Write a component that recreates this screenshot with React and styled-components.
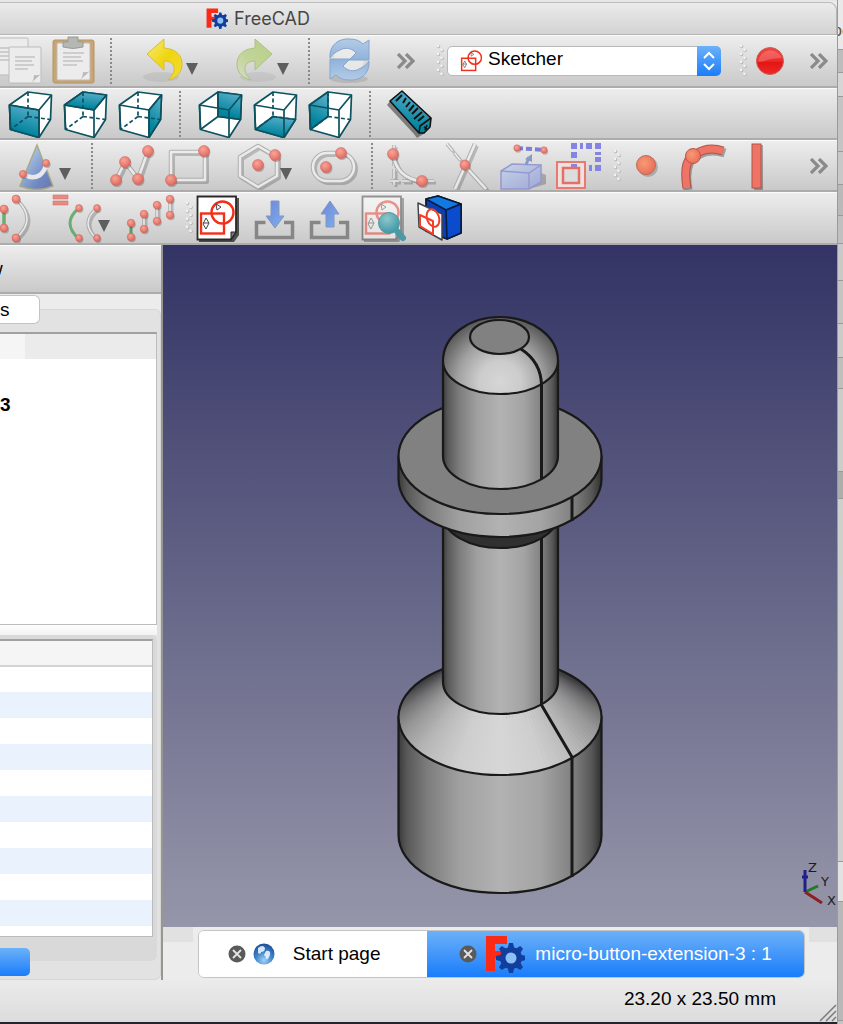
import { useState } from 'react'
import styled, { createGlobalStyle, css } from 'styled-components'

const GlobalStyle = createGlobalStyle`
  * {
    box-sizing: border-box;
  }
  body {
    margin: 0;
    background: #c4c4c4;
    font-family: "Liberation Sans", Arial, sans-serif;
    font-size: 19px;
    color: #000;
  }
  button {
    font: inherit;
    color: inherit;
    border: 0;
    padding: 0;
    background: none;
  }
`

/* ---------- shared svg paints ---------- */

const Paints = () => (
  <HiddenSvg aria-hidden="true">
    <defs>
      <radialGradient id="ball" cx="0.4" cy="0.35" r="0.65">
        <stop offset="0" stopColor="#ff9c8c" />
        <stop offset="1" stopColor="#e0574c" />
      </radialGradient>
      <radialGradient id="point" cx="0.4" cy="0.4" r="0.65">
        <stop offset="0" stopColor="#f79a74" />
        <stop offset="1" stopColor="#ea6d58" />
      </radialGradient>
      <linearGradient id="teal" x1="0.6" y1="0" x2="0.3" y2="1">
        <stop offset="0" stopColor="#58aeca" />
        <stop offset="0.8" stopColor="#02849e" />
      </linearGradient>
      <linearGradient id="gold" x1="0" y1="0" x2="1" y2="1">
        <stop offset="0" stopColor="#f6ec7c" />
        <stop offset="0.5" stopColor="#efd50f" />
        <stop offset="1" stopColor="#f2dc3a" />
      </linearGradient>
      <linearGradient id="green" x1="0" y1="0" x2="1" y2="1">
        <stop offset="0" stopColor="#b6cf86" />
        <stop offset="0.6" stopColor="#c3d49a" />
        <stop offset="1" stopColor="#d6dfc6" />
      </linearGradient>
      <linearGradient id="sync" x1="0" y1="0" x2="0" y2="1">
        <stop offset="0" stopColor="#b4cbe6" />
        <stop offset="1" stopColor="#8fb2dc" />
      </linearGradient>
      <linearGradient id="coneBlue" x1="0" y1="0" x2="1" y2="1">
        <stop offset="0.2" stopColor="#a3c3ea" />
        <stop offset="0.7" stopColor="#5f7cc0" />
        <stop offset="1" stopColor="#5a66b0" />
      </linearGradient>
      <linearGradient id="arrowBlue" x1="0" y1="0" x2="1" y2="1">
        <stop offset="0" stopColor="#6d84dc" />
        <stop offset="1" stopColor="#7fb2ea" />
      </linearGradient>
      <linearGradient id="boxBlue" x1="0" y1="0" x2="1" y2="1">
        <stop offset="0" stopColor="#c3d4ea" />
        <stop offset="1" stopColor="#98a2d8" />
      </linearGradient>
      <linearGradient id="record" x1="0" y1="0" x2="0" y2="1">
        <stop offset="0" stopColor="#f2453f" />
        <stop offset="0.5" stopColor="#ec2b28" />
        <stop offset="0.55" stopColor="#e31515" />
        <stop offset="1" stopColor="#ee2a26" />
      </linearGradient>
      <radialGradient id="lens" cx="0.4" cy="0.3" r="0.7">
        <stop offset="0" stopColor="#8fc6cc" />
        <stop offset="1" stopColor="#3f98a4" />
      </radialGradient>
      <radialGradient id="earth" cx="0.5" cy="0.8" r="0.8">
        <stop offset="0" stopColor="#9fd4f8" />
        <stop offset="0.5" stopColor="#3f83c8" />
        <stop offset="1" stopColor="#1d4c94" />
      </radialGradient>
      <linearGradient id="cylinder" x1="0" y1="0" x2="1" y2="0">
        <stop offset="0" stopColor="#3a3a3a" />
        <stop offset="0.04" stopColor="#585858" />
        <stop offset="0.14" stopColor="#7c7c7c" />
        <stop offset="0.3" stopColor="#a0a0a0" />
        <stop offset="0.5" stopColor="#b2b2b2" />
        <stop offset="0.7" stopColor="#a4a4a4" />
        <stop offset="0.86" stopColor="#808080" />
        <stop offset="0.95" stopColor="#585858" />
        <stop offset="1" stopColor="#303030" />
      </linearGradient>
      <radialGradient id="dome" gradientUnits="userSpaceOnUse" cx="500" cy="382" r="70">
        <stop offset="0" stopColor="#d6d6d6" />
        <stop offset="0.3" stopColor="#cccccc" />
        <stop offset="0.6" stopColor="#a2a2a2" />
        <stop offset="0.85" stopColor="#6c6c6c" />
        <stop offset="1" stopColor="#4c4c4c" />
      </radialGradient>
    </defs>
  </HiddenSvg>
)

/* ---------- icons, all on a 46 x 46 grid ---------- */

const Ball = ({ x, y, r = 5.5 }) => (
  <g>
    <circle cx={x + 1} cy={y + 1.5} r={r} fill="#000" opacity="0.25" />
    <circle cx={x} cy={y} r={r} fill="url(#ball)" stroke="#d2564c" strokeWidth="0.6" />
  </g>
)

const Wire = ({ d, w = 4, dash }) => (
  <g fill="none" strokeLinejoin="round">
    <path d={d} stroke="#000" opacity="0.22" strokeWidth={w} strokeDasharray={dash} transform="translate(2 2)" />
    <path d={d} stroke="#a8a8a8" strokeWidth={w + 0.5} strokeDasharray={dash} />
    <path d={d} stroke="#eeeeee" strokeWidth={w - 1.5} strokeDasharray={dash} />
  </g>
)

const cubeFaces = {
  front: 'M2.5 14L32 19V46.5L3.5 38.5Z',
  top: 'M2.5 14L21 1L44.5 4L32 19Z',
  right: 'M32 19L44.5 4L43.5 28.5L32 46.5Z',
  rear: 'M21 1L44.5 4L43.5 28.5L21 25.5Z',
  bottom: 'M3.5 38.5L21 25.5L43.5 28.5L32 46.5Z',
  left: 'M2.5 14L21 1V25.5L3.5 38.5Z',
}

const CubeIcon = ({ face }) => (
  <g fill="none" stroke="#0c5260" strokeWidth="1.7" strokeLinejoin="round">
    <path d="M2.5 14L21 1L44.5 4L43.5 28.5L32 46.5L3.5 38.5Z" fill="#fff" />
    <path d={cubeFaces[face]} fill="url(#teal)" />
    <path d="M21 1V25.5M21 25.5L3.5 38.5M21 25.5L43.5 28.5" strokeDasharray={face === 'rear' ? undefined : '4 2.5'} />
    <path d="M2.5 14L32 19L44.5 4M32 19V46.5M2.5 14L3.5 38.5" />
  </g>
)

const Page = ({ x, y, w, h }) => (
  <g>
    <rect x={x} y={y} width={w} height={h} rx="1" fill="#ececec" stroke="#bcbcbc" />
    <path
      d={`M${x + 6} ${y + 10}h${w - 12}M${x + 6} ${y + 14}h${w - 15}M${x + 6} ${y + 18}h${w - 13}M${x + 6} ${y + 22}h${w - 19}`}
      stroke="#c2c2c2"
      strokeWidth="1.4"
    />
    <path d={`M${x + w} ${y + h - 9}q-3 2 -7 1q0 5 -3 8z`} fill="#b9b9b9" />
  </g>
)

const SketchMark = () => (
  <g fill="none" stroke="#f2301a" strokeWidth="2.4">
    <circle cx="27.5" cy="17.5" r="11" />
    <rect x="6" y="18.5" width="23" height="20" />
    <path d="M21 9l5 3l-4 3zM11 23l3 5l-3 6l-3 -5zM8 28h6" stroke="#444" strokeWidth="1" />
  </g>
)

const SketchPage = () => (
  <g>
    <path d="M4 3H44V40L39 47H4Z" fill="#222" opacity="0.75" />
    <path d="M2.5 1.5H41V37L36 44.5H2.5Z" fill="#fff" stroke="#2a2a2a" strokeWidth="1.8" />
    <path d="M41 37H36V44Z" fill="#777" stroke="#222" />
    <SketchMark />
  </g>
)

const undoPath = 'M6 16L23 1V10C36 11 41 18 41 26C41 34 36 40 27 42C31 38 34 34 33 29C32 25 28 23 23 23V32Z'
const syncPath = 'M4 20C3 6 14 0 24 1C30 1 34 3 37 6L43 2V22H23L30 15C26 10 19 9 14 12C9 14 6 17 4 20Z'
const trayPath = 'M15.5 27.5H6.5V42.5H42.5V27.5H34'

const drawings = {
  copy: (
    <g>
      <Page x={-6} y={0} w={38} h={37} />
      <Page x={13} y={9} w={32} h={36} />
    </g>
  ),
  paste: (
    <g>
      <rect x="2" y="2" width="41" height="43" rx="2" fill="#caa571" stroke="#b39468" />
      <Page x={6} y={5} w={33} h={37} />
      <path d="M12 9V4H17V-1H27V4H32V9Q22 12 12 9Z" fill="#b4b7b2" stroke="#999c97" />
    </g>
  ),
  undo: (
    <g>
      <ellipse cx="20" cy="39" rx="18" ry="5" fill="#000" opacity="0.06" />
      <path d={undoPath} fill="url(#gold)" stroke="#d9be2c" />
    </g>
  ),
  redo: (
    <g>
      <ellipse cx="26" cy="39" rx="18" ry="5" fill="#000" opacity="0.05" />
      <path d={undoPath} fill="url(#green)" stroke="#adc184" transform="matrix(-1 0 0 1 46 0)" />
    </g>
  ),
  refresh: (
    <g stroke="#86a6cc">
      <ellipse cx="23" cy="41" rx="19" ry="4" fill="#000" opacity="0.1" stroke="none" />
      <circle cx="23" cy="21" r="15" fill="#eee" stroke="none" opacity="0.7" />
      <path d={syncPath} fill="url(#sync)" />
      <path d={syncPath} fill="url(#sync)" transform="rotate(180 23.5 21.5)" />
    </g>
  ),
  record: (
    <g>
      <circle cx="23" cy="23" r="13.5" fill="url(#record)" stroke="#c9605c" />
      <path d="M11 24A12.5 12.5 0 0 1 35 20Q26 20 20 22Q15 24 11 24Z" fill="#fff" opacity="0.2" />
    </g>
  ),
  measure: (
    <g strokeLinejoin="round">
      <path d="M0 14L3 10L32 42L38 42L30 47L27 43Z" fill="#555" opacity="0.7" />
      <path d="M3 10L15 0L44 27L43 36L37 42L32 42Z" fill="url(#teal)" stroke="#111" strokeWidth="1.6" />
      <path d="M32 42L33 35L44 27M37 36l3 2M38 39l2 -5" fill="none" stroke="#111" strokeWidth="1.6" />
      <path d="M9 10L15 4M16 12L19 7M19 16L23 11M22 20L27 14M25 23L31 17M27 28L35 21M31 30L37 25" stroke="#111" strokeWidth="2" />
    </g>
  ),
  cone: (
    <g>
      <path d="M23 2L39 43Q23 50 6 43Z" fill="url(#coneBlue)" stroke="#a3a37c" strokeWidth="1.5" />
      <path d="M9 31Q18 37 26 32Q31 28 32 21" fill="none" stroke="#ececec" strokeWidth="4.5" />
      <Ball x={9} y={31} r={3.6} />
      <Ball x={32} y={20} r={3.6} />
    </g>
  ),
  polyline: (
    <g>
      <Wire d="M7 37L16 19L29 36L39 8" />
      <Ball x={7} y={37} />
      <Ball x={16} y={19} />
      <Ball x={29} y={36} />
      <Ball x={39} y={8} />
    </g>
  ),
  rectangle: (
    <g>
      <Wire d="M7 9H41V37H7Z" />
      <Ball x={7} y={37} />
      <Ball x={40} y={8} />
    </g>
  ),
  polygon: (
    <g>
      <Wire d="M23 3L42 14V33L23 44L5 33V14Z" />
      <Ball x={40} y={12} />
      <Ball x={23} y={22} />
    </g>
  ),
  slot: (
    <g>
      <Wire d="M18 10H31A14 14 0 0 1 31 38H18A14 14 0 0 1 18 10Z" />
      <Ball x={32} y={10} />
      <Ball x={17} y={24} />
    </g>
  ),
  fillet: (
    <g>
      <Wire d="M5 2V42M1 38H45" w={3} dash="9 3" />
      <Wire d="M4 11Q8 36 33 38" />
      <Ball x={4} y={11} />
      <Ball x={33} y={38} />
    </g>
  ),
  trim: (
    <g>
      <Wire d="M3 1L21 23" w={3} dash="9 3" />
      <Wire d="M31 1L11 46M21 23L42 46" />
      <Ball x={21} y={22} r={5} />
    </g>
  ),
  external: (
    <g>
      <path d="M30 46L47 41V32L42 30Z" fill="#000" opacity="0.25" />
      <path d="M2 28L13 21L42 22V39L30 46H2Z" fill="url(#boxBlue)" stroke="#8c8fd0" strokeWidth="1.5" />
      <path d="M2 28L30 30L42 22M30 30V46" fill="none" stroke="#8c8fd0" strokeWidth="1.5" />
      <path d="M27 22L30 14" stroke="#7a90c4" strokeWidth="3" />
      <path d="M26 16L33 11L33 19Z" fill="#7a90c4" />
      <path d="M18 5L45 7" stroke="#6c6cd8" strokeWidth="4" strokeDasharray="6 3" />
      <Ball x={18} y={5} r={3.2} />
      <Ball x={45} y={7} r={3.2} />
    </g>
  ),
  carbon: (
    <g fill="none">
      <path
        d="M17 0h6v6h-6zM26 0h3v6h-3zM32 0h6v6h-6zM41 0h6v6h-6zM17 9h6v6h-6zM41 9h6v3h-6zM41 14h6v5h-6zM41 22h6v6h-6zM35 22h3v6h-3z"
        fill="#8484e4"
      />
      <rect x="3" y="19" width="28" height="26" fill="#eee2e0" stroke="#ea7a70" strokeWidth="2" />
      <path d="M17 21h6v4h-6z" fill="#8484e4" />
      <rect x="9" y="25" width="16" height="15" fill="#ddd" stroke="#e27066" strokeWidth="2.5" />
    </g>
  ),
  dot: (
    <g>
      <circle cx="25" cy="24" r="10" fill="#000" opacity="0.2" />
      <circle cx="23" cy="22" r="9.5" fill="url(#point)" stroke="#bb6a58" />
    </g>
  ),
  arc: (
    <g fill="none">
      <path d="M10 47Q5 18 20 12Q32 5 47 10" stroke="#000" opacity="0.3" strokeWidth="9" />
      <path d="M9 45Q4 16 18 11Q30 3 45 8" stroke="#b3524a" strokeWidth="9" />
      <path d="M9 45Q4 16 18 11Q30 3 45 8" stroke="#ee7466" strokeWidth="7" />
      <circle cx="15" cy="13" r="7.5" fill="url(#point)" stroke="#b8584e" />
    </g>
  ),
  line: (
    <g>
      <rect x="21" y="2" width="9" height="45" fill="#000" opacity="0.3" />
      <rect x="19" y="1" width="9" height="44" fill="#ee7466" stroke="#b3524a" />
    </g>
  ),
  tangent: (
    <g>
      <Wire d="M33 4Q55 24 33 43" w={3} />
      <path d="M21 14V33" stroke="#58a660" strokeWidth="3.5" />
      <Ball x={21} y={14} r={4} />
      <Ball x={21} y={33} r={4} />
      <Ball x={33} y={4} r={4} />
      <Ball x={33} y={43} r={4} />
    </g>
  ),
  equal: (
    <g>
      <path d="M0 0H15V4H0ZM0 6H15V10H0Z" fill="#ea7a70" stroke="#c2665e" strokeWidth="0.6" />
      <path d="M26 13Q8 28 26 44" fill="none" stroke="#58a660" strokeWidth="3" />
      <Wire d="M44 13Q26 28 44 44" w={3} />
      <Ball x={26} y={13} r={3.4} />
      <Ball x={26} y={43} r={3.4} />
      <Ball x={44} y={13} r={3.4} />
      <Ball x={44} y={43} r={3.4} />
    </g>
  ),
  symmetric: (
    <g>
      <path d="M5 28V43" stroke="#3f9448" strokeWidth="3" />
      <Wire d="M18 19V34M31 10V26M44 4V20" w={3} />
      {[[5, 28], [5, 42], [18, 19], [18, 34], [31, 10], [31, 26], [44, 4], [44, 20]].map(([x, y]) => (
        <Ball key={`${x}-${y}`} x={x} y={y} r={3.8} />
      ))}
    </g>
  ),
  sketch: <SketchPage />,
  leave: (
    <g>
      <path d={trayPath} fill="none" stroke="#868686" strokeWidth="3.5" />
      <path d="M21 6H29V21H34L25 33L16 21H21Z" fill="url(#arrowBlue)" stroke="#8297bd" />
    </g>
  ),
  open: (
    <g>
      <path d={trayPath} fill="none" stroke="#868686" strokeWidth="3.5" />
      <path d="M21 32H29V19H34L25 6L16 19H21Z" fill="url(#arrowBlue)" stroke="#8297bd" />
    </g>
  ),
  view: (
    <g>
      <g opacity="0.45">
        <SketchPage />
      </g>
      <path d="M36 35L43 43" stroke="#4a9aa6" strokeWidth="6" strokeLinecap="round" />
      <circle cx="29" cy="28" r="10.5" fill="url(#lens)" stroke="#5c9aa2" />
    </g>
  ),
  mapped: (
    <g strokeLinejoin="round">
      <path d="M11 4L23 1L46 9V38L32 44L11 36Z" fill="#0a3fb8" stroke="#061a3c" strokeWidth="1.8" />
      <path d="M11 4L23 1L46 9L31 15Z" fill="#1279e0" stroke="#061a3c" strokeWidth="1.5" />
      <path d="M31 15L46 9V38L32 44Z" fill="#0b4ccf" stroke="#061a3c" strokeWidth="1.5" />
      <path d="M3 8L27 19V45L4 32Z" fill="#fff" stroke="#444" strokeWidth="1.5" />
      <g fill="none" stroke="#f2402c" strokeWidth="2">
        <ellipse cx="18" cy="23" rx="6" ry="9" transform="rotate(-20 18 23)" />
        <path d="M5 20L18 26V39L5 31Z" />
      </g>
    </g>
  ),
}

const Icon = ({ name, faded }) => (
  <IconSvg viewBox="0 0 46 46" $faded={faded} aria-hidden="true">
    {name.startsWith('cube-') ? <CubeIcon face={name.slice(5)} /> : drawings[name]}
  </IconSvg>
)

const teeth = Array.from({ length: 8 }, (_, i) => i * 45)

const Logo = ({ size }) => (
  <LogoSvg viewBox="0 0 40 38" $size={size} aria-hidden="true">
    <path d="M1 1H22V9H10V16H17V23H10V36H1Z" fill="#fb2a16" />
    <g fill="#123f9e" transform="translate(26 23)">
      {teeth.map((a) => (
        <path key={a} d="M-3.5 -9L-2 -15H2L3.5 -9Z" transform={`rotate(${a})`} />
      ))}
      <circle r="11" />
      <circle r="5.5" fill="#8cc0f6" />
    </g>
  </LogoSvg>
)

const Chevrons = () => (
  <svg width="18" height="16" viewBox="0 0 18 16" aria-hidden="true">
    <path d="M1 1L8 8L1 15M9 1L16 8L9 15" fill="none" stroke="#8a8a8a" strokeWidth="3.2" />
  </svg>
)

const Triangle = () => (
  <svg width="12" height="12" viewBox="0 0 12 12" aria-hidden="true">
    <path d="M0 0H12L6 12Z" fill="#5e5e5e" />
  </svg>
)

/* ---------- toolbars ---------- */

const Tool = ({ name, label, faded }) => (
  <ToolButton type="button" aria-label={label}>
    <Icon name={name} faded={faded} />
  </ToolButton>
)

const MenuTool = ({ name, label, faded, lead, width }) => (
  <MenuButton type="button" aria-label={label} aria-haspopup="menu" $lead={lead} $width={width}>
    <Icon name={name} faded={faded} />
    <MenuArrow>
      <Triangle />
    </MenuArrow>
  </MenuButton>
)

const Grip = () => (
  <GripSvg viewBox="0 0 8 34" aria-hidden="true">
    {[0, 8, 16, 24].map((y) => (
      <g key={y} fill="#b4b4b4">
        <circle cx="2.5" cy={y + 2.5} r="1.8" />
        <circle cx="6" cy={y + 6.5} r="1.8" />
        <circle cx="2" cy={y + 2} r="1.4" fill="#f2f2f2" />
        <circle cx="5.5" cy={y + 6} r="1.4" fill="#f2f2f2" />
      </g>
    ))}
  </GripSvg>
)

const Toolbars = () => {
  const [bench, setBench] = useState('Sketcher')

  return (
    <>
      <Toolbar $shift={9} $tall>
        <Tool name="copy" label="Copy" />
        <Tool name="paste" label="Paste" />
        <Separator $width={20} />
        <MenuTool name="undo" label="Undo" lead={20} width={91} />
        <MenuTool name="redo" label="Redo" lead={20} width={84} />
        <Separator />
        <Tool name="refresh" label="Refresh" />
        <MoreButton type="button" aria-label="More file tools" $width={60}>
          <Chevrons />
        </MoreButton>
        <Grip />
        <Workbench>
          <WorkbenchIcon viewBox="0 0 46 46" aria-hidden="true">
            <SketchMark />
          </WorkbenchIcon>
          <WorkbenchSelect aria-label="Workbench" value={bench} onChange={(e) => setBench(e.target.value)}>
            <option>Sketcher</option>
          </WorkbenchSelect>
          <Stepper>
            <svg width="14" height="20" viewBox="0 0 14 20">
              <path d="M2 7L7 2L12 7M2 13L7 18L12 13" fill="none" stroke="#fff" strokeWidth="2" />
            </svg>
          </Stepper>
        </Workbench>
        <Grip />
        <ToolButton type="button" aria-label="Record macro" $narrow>
          <Icon name="record" />
        </ToolButton>
        <MoreButton type="button" aria-label="More macro tools" $end>
          <Chevrons />
        </MoreButton>
      </Toolbar>

      <Toolbar $lead={2}>
        <Tool name="cube-front" label="Front" />
        <Tool name="cube-top" label="Top" />
        <Tool name="cube-right" label="Right" />
        <Separator />
        <Tool name="cube-rear" label="Rear" />
        <Tool name="cube-bottom" label="Bottom" />
        <Tool name="cube-left" label="Left" />
        <Separator />
        <Tool name="measure" label="Measure distance" />
      </Toolbar>

      <Toolbar>
        <MenuTool name="cone" label="Conics" faded lead={14} width={79} />
        <Separator />
        <Tool name="polyline" label="Polyline" faded />
        <Tool name="rectangle" label="Rectangle" faded />
        <MenuTool name="polygon" label="Polygon" faded lead={21} width={90} />
        <Tool name="slot" label="Slot" faded />
        <Separator />
        <Tool name="fillet" label="Fillet" faded />
        <Tool name="trim" label="Trim edge" faded />
        <Tool name="external" label="External geometry" faded />
        <Tool name="carbon" label="Carbon copy" />
        <Grip />
        <Tool name="dot" label="Point" />
        <Tool name="arc" label="Arc" />
        <Tool name="line" label="Line" />
        <MoreButton type="button" aria-label="More geometry tools" $end>
          <Chevrons />
        </MoreButton>
      </Toolbar>

      <Toolbar $shift={22} $tall>
        <Tool name="tangent" label="Block" faded />
        <MenuTool name="equal" label="Equal" faded lead={20} width={88} />
        <Tool name="symmetric" label="Symmetry" faded />
        <Grip />
        <Tool name="sketch" label="New sketch" />
        <Tool name="leave" label="Leave sketch" />
        <Tool name="open" label="Edit sketch" />
        <Tool name="view" label="View sketch" />
        <Tool name="mapped" label="Map sketch to face" />
      </Toolbar>
    </>
  )
}

/* ---------- side panel ---------- */

const rows = Array.from({ length: 10 }, (_, i) => i)

const SidePanel = () => (
  <Side>
    <DockTitle>
      <CutText>w</CutText>
    </DockTitle>
    <SideTab type="button">s</SideTab>
    <Pane>
      <Tree>
        <TreeHeader />
        <TreeList>
          <li>3</li>
        </TreeList>
      </Tree>
      <Divider />
      <Properties>
        <PropertyFrame>
          <PropertyTable aria-label="Properties">
            <thead>
              <tr>
                <th />
              </tr>
            </thead>
            <tbody>
              {rows.map((i) => (
                <tr key={i}>
                  <td />
                </tr>
              ))}
            </tbody>
          </PropertyTable>
        </PropertyFrame>
      </Properties>
      <DataButton type="button" aria-label="Data" />
    </Pane>
  </Side>
)

/* ---------- 3d view ---------- */

// grey level of the tapered face, by angle from the front
const shades = [[0, 214], [25, 206], [50, 184], [75, 150], [95, 112], [115, 66], [130, 40], [180, 36]]

const shade = (angle) => {
  const a = Math.abs(angle)
  const i = shades.findIndex(([stop]) => stop >= a) || 1
  const [a0, s0] = shades[i - 1]
  const [a1, s1] = shades[i]
  const level = Math.round(s0 + ((s1 - s0) * (a - a0)) / (a1 - a0))
  return `rgb(${level},${level},${level})`
}

const onRing = (angle, rx, ry, cy) => {
  const t = (angle * Math.PI) / 180
  return `${(500 + rx * Math.sin(t)).toFixed(1)} ${(cy + ry * Math.cos(t)).toFixed(1)}`
}

const wedges = Array.from({ length: 120 }, (_, i) => i * 3 - 180).map((a) => ({
  a,
  d: `M${onRing(a, 102, 58, 717)}L${onRing(a + 3.5, 102, 58, 717)}L${onRing(a + 3.5, 56, 31, 682)}L${onRing(a, 56, 31, 682)}Z`,
}))

const Part = () => (
  <PartSvg viewBox="397 315 206 580" role="img" aria-label="Button extension">
    <g stroke="#191919" strokeWidth="2.2" strokeLinejoin="round">
      <path d="M398.5 717V835A101.5 58 0 0 0 601.5 835V717Z" fill="url(#cylinder)" />
      <g stroke="none">
        {wedges.map(({ a, d }) => (
          <path key={a} d={d} fill={shade(a + 1.5)} />
        ))}
      </g>
      <ellipse cx="500" cy="717" rx="101.5" ry="58" fill="none" />
      <path d="M443 520V682A57.5 32 0 0 0 558 682V520Z" fill="url(#cylinder)" />
      <path d="M541.5 530V705L572 757V877" fill="none" strokeWidth="3" />
      <path d="M443 500V515A57.5 33 0 0 0 558 515V500Z" fill="#303030" />
      <path d="M398.5 456V479A101.5 58 0 0 0 601.5 479V456Z" fill="url(#cylinder)" />
      <ellipse cx="500" cy="456" rx="101.5" ry="58" fill="#818181" />
      <path d="M572 497V521" strokeWidth="3" />
      <path d="M443 360V456A57.5 33 0 0 0 558 456V360Z" fill="url(#cylinder)" />
      <path d="M443 361C443 335 470 317 500 317C530 317 558 335 558 361A57.5 33 0 0 1 443 361Z" fill="url(#dome)" />
      <ellipse cx="499.5" cy="337" rx="29.5" ry="17" fill="#818181" />
      <path d="M521 349Q541 362 541.5 385V479" fill="none" strokeWidth="3" />
    </g>
  </PartSvg>
)

const AxisCross = () => (
  <AxisSvg viewBox="0 0 36 48" aria-hidden="true">
    <path d="M4 31L17 25" stroke="#1f7a24" strokeWidth="3" />
    <path d="M4 31V9M1 16H7" stroke="#20208c" strokeWidth="3" fill="none" />
    <path d="M4 31L21 42M12 36L18 40" stroke="#8c2024" strokeWidth="3" />
    <text x="7" y="11">Z</text>
    <text x="20" y="25">Y</text>
    <text x="26" y="44">X</text>
  </AxisSvg>
)

const CloseIcon = () => (
  <svg width="18" height="18" viewBox="0 0 18 18" aria-hidden="true">
    <circle cx="9" cy="9" r="8.5" fill="#5a5a5a" />
    <path d="M5 5L13 13M13 5L5 13" stroke="#e4e4e4" strokeWidth="1.8" />
  </svg>
)

const Globe = () => (
  <svg width="22" height="22" viewBox="0 0 22 22" aria-hidden="true">
    <circle cx="11" cy="11" r="10.5" fill="url(#earth)" />
    <path d="M5 5Q10 1 12 5Q12 9 8 9Q8 12 5 10ZM13 8Q18 7 17 12Q15 17 13 16Q13 13 11 12Z" fill="#e6f3ff" opacity="0.9" />
  </svg>
)

const backdrop = [
  [50, '#e9e9e9'], [11, '#bdbdbd'], [24, '#d6d6d6'], [55, '#c4c4c4'], [33, '#c8c8c8'], [31, '#b9b9b9'],
  [28, '#c0c0c0'], [37, '#c9c9c9'], [43, '#c4c4c4'], [34, '#cbcbcb'], [31, '#bfbfbf'], [83, '#cccccc'],
  [27, '#adadad'], [363, '#cfcfcf'], [40, '#e2e2e2'], [119, '#b8b8b8'],
]

export default function App() {
  const [active, setActive] = useState('doc')

  return (
    <Desktop>
      <GlobalStyle />
      <Paints />
      <Window>
        <TitleBar>
          <Logo size={22} />
          <h1>FreeCAD</h1>
        </TitleBar>
        <Toolbars />
        <Body>
          <SidePanel />
          <Main>
            <Viewer>
              <Part />
              <AxisCross />
            </Viewer>
            <TabStrip>
              <TabBar>
                <DocTab $first $active={active === 'start'} $grow={211}>
                  <button type="button" aria-label="Close start page">
                    <CloseIcon />
                  </button>
                  <TabButton type="button" $gap={18} aria-pressed={active === 'start'} onClick={() => setActive('start')}>
                    <Globe />
                    Start page
                  </TabButton>
                </DocTab>
                <DocTab $active={active === 'doc'} $grow={378}>
                  <button type="button" aria-label="Close document">
                    <CloseIcon />
                  </button>
                  <TabButton type="button" $gap={10} aria-pressed={active === 'doc'} onClick={() => setActive('doc')}>
                    <Logo size={40} />
                    micro-button-extension-3 : 1
                  </TabButton>
                </DocTab>
              </TabBar>
            </TabStrip>
          </Main>
        </Body>
        <StatusBar>
          <span>23.20 x 23.50 mm</span>
          <ResizeGrip viewBox="0 0 18 18" aria-hidden="true">
            <path d="M1 17L17 1M7 17L17 7M13 17L17 13" stroke="#7c7c7c" strokeWidth="1.5" />
          </ResizeGrip>
        </StatusBar>
      </Window>
      <Backdrop>
        {backdrop.map(([height, color], i) => (
          <Slab key={i} $height={height} $color={color}>
            {i === 0 && 'oc'}
          </Slab>
        ))}
      </Backdrop>
    </Desktop>
  )
}

const bar = css`
  background: linear-gradient(#ededed, #c9c9c9);
  border-top: 1px solid #fbfbfb;
  border-bottom: 2px solid #acacac;
`

const HiddenSvg = styled.svg`
  display: block;
  position: absolute;
  width: 0;
  height: 0;
`

const Desktop = styled.div`
  display: grid;
  grid-template-columns: minmax(0, 1fr) 6px;
  min-height: 100vh;
  overflow: hidden;
`

const Window = styled.div`
  display: flex;
  flex-direction: column;
  min-width: 0;
  border-top: 2px solid #e6e6e6;
  border-bottom: 2px solid #23242c;
  background: #ececec;
`

const TitleBar = styled.header`
  display: flex;
  align-items: center;
  justify-content: center;
  gap: 6px;
  height: 33px;
  padding-right: 320px;
  border-top: 1px solid #bdbdbd;
  border-bottom: 1px solid #b4b4b4;
  border-right: 1px solid #b4b4b4;
  border-radius: 0 8px 0 0;
  background: linear-gradient(#ebebeb, #d3d3d3);
  h1 {
    margin: 0;
    font: 400 18px Inter, "Liberation Sans", sans-serif;
    color: #464646;
  }
`

const Toolbar = styled.div`
  ${bar}
  display: flex;
  align-items: center;
  height: ${(props) => (props.$tall ? 53 : 52)}px;
  overflow: hidden;
  padding-left: ${(props) => props.$lead || 0}px;
  > :first-child {
    margin-left: -${(props) => props.$shift || 0}px;
  }
`

const ToolButton = styled.button`
  display: flex;
  flex: none;
  align-items: center;
  justify-content: center;
  width: ${(props) => (props.$narrow ? 42 : 55)}px;
  height: 100%;
  margin-right: ${(props) => (props.$narrow ? 10 : 0)}px;
`

const MenuButton = styled.button`
  display: flex;
  flex: none;
  align-items: center;
  width: ${(props) => props.$width}px;
  height: 100%;
  padding-left: ${(props) => props.$lead}px;
`

const MenuArrow = styled.span`
  display: flex;
  margin-left: -1px;
  padding-top: 16px;
`

const MoreButton = styled.button`
  display: flex;
  flex: none;
  align-items: center;
  justify-content: center;
  width: ${(props) => props.$width || 36}px;
  height: 100%;
  margin-left: ${(props) => (props.$end ? 'auto' : 0)};
`

const Separator = styled.span`
  flex: none;
  width: ${(props) => props.$width || 25}px;
  height: 46px;
  background: repeating-linear-gradient(#8a8a8a 0 2px, transparent 2px 4px) center / 2px 100% no-repeat;
`

const IconSvg = styled.svg`
  display: block;
  flex: none;
  width: 46px;
  height: 46px;
  overflow: visible;
  opacity: ${(props) => (props.$faded ? 0.85 : 1)};
`

const LogoSvg = styled.svg`
  display: block;
  flex: none;
  width: ${(props) => props.$size}px;
`

const GripSvg = styled.svg`
  flex: none;
  width: 8px;
  height: 34px;
  margin: 0 2px 0 4px;
  ${ToolButton} + & {
    margin: 0 -3px 0 9px;
  }
  ${MoreButton} + & {
    margin: 0 3px 0 0;
  }
`

const Workbench = styled.div`
  position: relative;
  flex: 1;
  min-width: 160px;
  margin-right: 14px;
`

const WorkbenchSelect = styled.select`
  display: block;
  width: 100%;
  height: 30px;
  padding: 0 30px 6px 40px;
  border: 1px solid #b9b9b9;
  border-radius: 5px;
  background: #fff;
  color: #000;
  font: 19px "Liberation Sans", Arial, sans-serif;
  appearance: none;
`

const WorkbenchIcon = styled.svg`
  position: absolute;
  left: 11px;
  top: 1px;
  width: 28px;
  height: 28px;
`

const Stepper = styled.span`
  position: absolute;
  top: 0;
  right: 0;
  bottom: 0;
  display: flex;
  align-items: center;
  justify-content: center;
  width: 24px;
  border-radius: 0 5px 5px 0;
  background: linear-gradient(#6cb1f8, #1a7dfb);
  pointer-events: none;
`

const Body = styled.div`
  display: grid;
  flex: 1;
  grid-template-columns: 163px minmax(0, 1fr);
`

const Side = styled.aside`
  display: flex;
  flex-direction: column;
  border-right: 2px solid #979792;
  background: #ececec;
`

const DockTitle = styled.div`
  ${bar}
  height: 49px;
  padding-top: 12px;
  overflow: hidden;
`

const CutText = styled.span`
  display: block;
  margin-left: -11px;
`

const SideTab = styled.button`
  z-index: 1;
  align-self: flex-start;
  width: 40px;
  height: 29px;
  margin: 1px 0 -15px;
  border: 1px solid #c4c4c4;
  border-left: 0;
  border-radius: 0 6px 6px 0;
  background: #fff;
  text-align: left;
`

const Pane = styled.div`
  display: flex;
  flex: 1;
  flex-direction: column;
  align-items: stretch;
  padding: 22px 3px 3px 0;
  border: 1px solid #d6d6d6;
  border-left: 0;
  border-radius: 0 6px 6px 0;
  background: #e2e2e2;
`

const Tree = styled.div`
  flex: 1;
  border: 1px solid #bcbcbc;
  border-top: 2px solid #a0a0a0;
  border-left: 0;
  background: #fff;
`

const TreeHeader = styled.div`
  height: 25px;
  background: linear-gradient(#f5f5f5, #f5f5f5) left / 25px 100% no-repeat #ebebeb;
`

const TreeList = styled.ul`
  margin: 0;
  padding: 33px 0 0;
  list-style: none;
  font-weight: 700;
  line-height: 26px;
`

const Divider = styled.div`
  height: 10px;
  background: linear-gradient(#fefefe, #f2f2f2);
`

const Properties = styled.div`
  padding: 4px 4px 24px 0;
  border-radius: 0 6px 6px 0;
  background: #d9d9d9;
`

const PropertyFrame = styled.div`
  padding-bottom: 10px;
  border: 1px solid #bcbcbc;
  border-top: 2px solid #a0a0a0;
  border-left: 0;
  background: #fff;
`

const PropertyTable = styled.table`
  width: 100%;
  border-collapse: collapse;
  th {
    height: 25px;
    padding: 0;
    border-bottom: 2px solid #d4d4d4;
    background: #f5f5f5;
  }
  td {
    height: 26px;
    padding: 0;
  }
  tbody tr:nth-child(even) {
    background: #eaf2fe;
  }
`

const DataButton = styled.button`
  width: 30px;
  height: 28px;
  margin-top: -13px;
  border-radius: 0 5px 5px 0;
  background: linear-gradient(#6cb1f8, #1a7dfb);
`

const Main = styled.main`
  display: flex;
  flex-direction: column;
  min-width: 0;
`

const Viewer = styled.div`
  position: relative;
  flex: 1;
  padding: 70px 0 32px;
  background: linear-gradient(#333365, #9696aa);
`

const PartSvg = styled.svg`
  display: block;
  width: 206px;
  height: 580px;
  margin: 0 auto;
`

const AxisSvg = styled.svg`
  position: absolute;
  right: 0;
  bottom: 18px;
  width: 36px;
  height: 48px;
  text {
    font: 13px "DejaVu Sans", sans-serif;
    fill: #1c1c1c;
  }
`

const TabStrip = styled.nav`
  padding: 3px 32px 2px 35px;
  background:
    linear-gradient(#e1e1e1, #e1e1e1) left top / 30px 15px no-repeat,
    linear-gradient(#e1e1e1, #e1e1e1) right top / 28px 15px no-repeat,
    #ececec;
`

const TabBar = styled.div`
  display: flex;
  height: 48px;
  border: 1px solid #c4c4c4;
  border-radius: 6px;
  background: #fff;
`

const DocTab = styled.div`
  display: flex;
  flex: ${(props) => props.$grow} 1 0;
  align-items: center;
  justify-content: center;
  gap: ${(props) => (props.$first ? 7 : 8)}px;
  padding-right: ${(props) => (props.$first ? 18 : 0)}px;
  border-radius: ${(props) => (props.$first ? '5px 0 0 5px' : '0 5px 5px 0')};
  color: ${(props) => (props.$active ? '#fff' : '#000')};
  background: ${(props) => (props.$active ? 'linear-gradient(#6cb1f8, #1a7dfb)' : '#fff')};
  svg {
    display: block;
  }
`

const TabButton = styled.button`
  display: flex;
  align-items: center;
  gap: ${(props) => props.$gap}px;
  white-space: nowrap;
`

const StatusBar = styled.footer`
  position: relative;
  display: flex;
  justify-content: flex-end;
  height: 42px;
  padding: 8px 61px 0 0;
  background: linear-gradient(#ebebeb, #dcdcdc);
`

const ResizeGrip = styled.svg`
  position: absolute;
  right: 0;
  bottom: 0;
  width: 18px;
  height: 18px;
`

const Backdrop = styled.div`
  overflow: hidden;
  border-left: 1px solid #9a9a9a;
`

const Slab = styled.div`
  height: ${(props) => props.$height}px;
  padding-top: 22px;
  overflow: hidden;
  border-bottom: 1px solid #999;
  background: ${(props) => props.$color};
  font-size: 16px;
  color: #555;
  text-indent: -5px;
`
